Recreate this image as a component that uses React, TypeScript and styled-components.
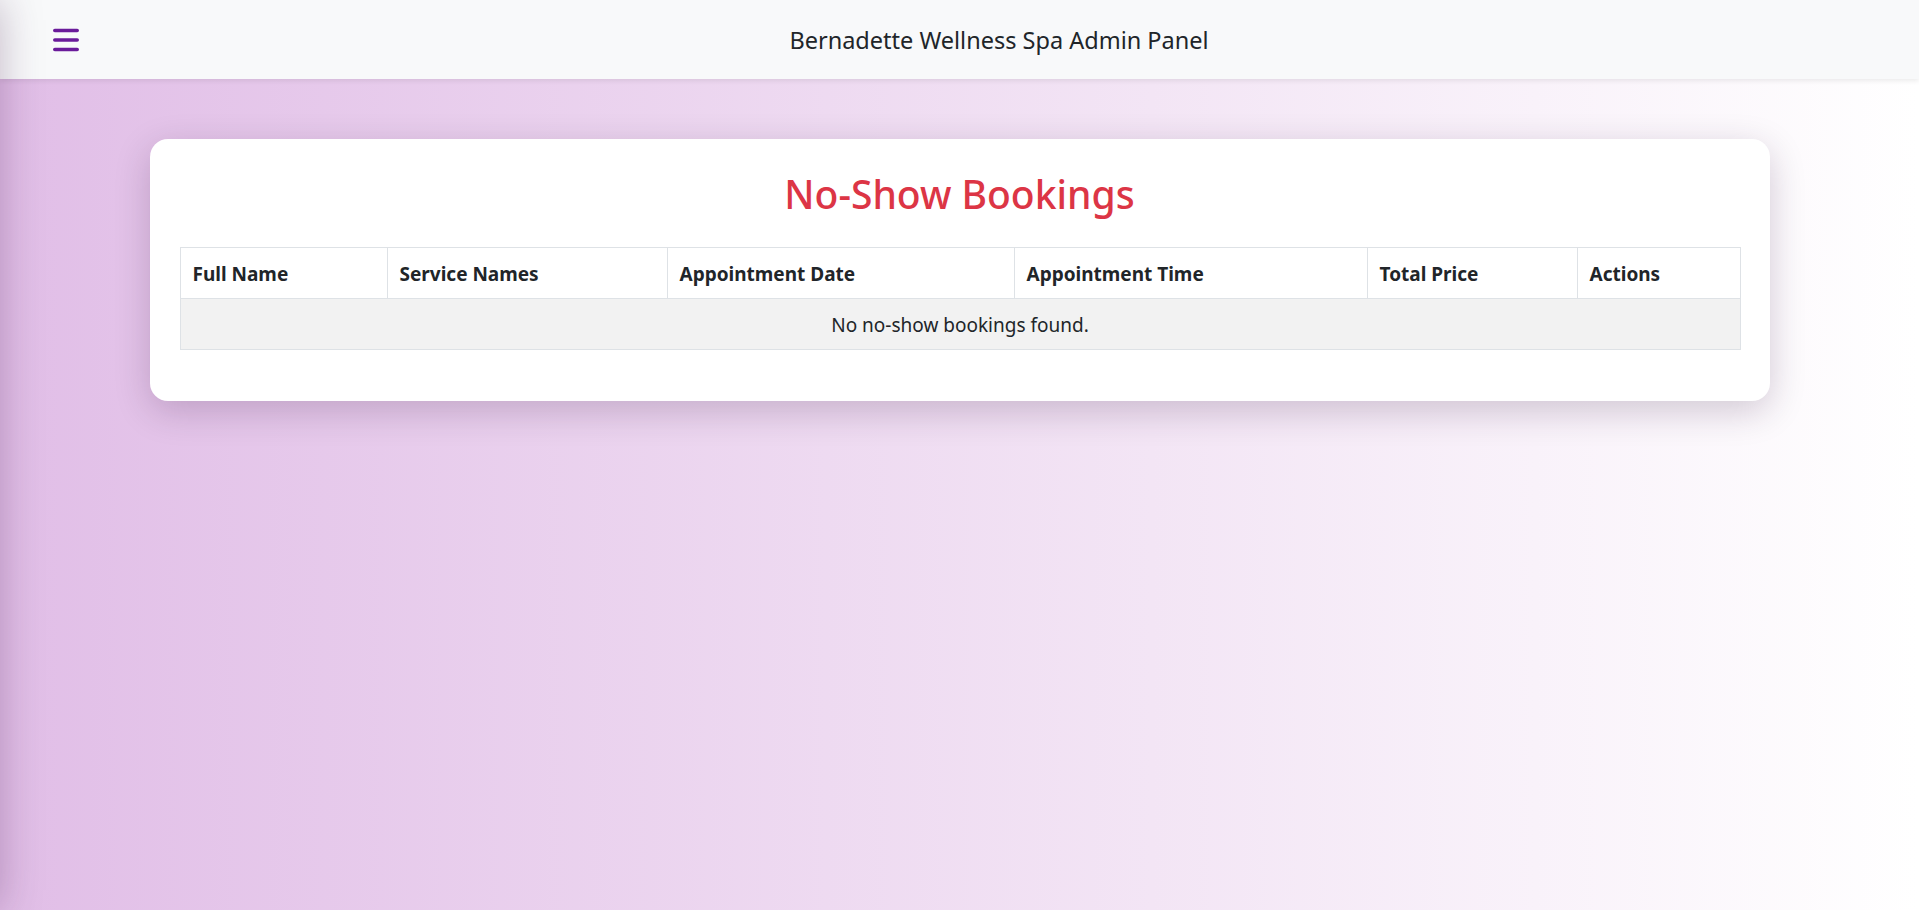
import React from "react";
import styled, { createGlobalStyle } from "styled-components";

const GlobalStyle = createGlobalStyle`
  * { box-sizing: border-box; }
  html, body { margin: 0; padding: 0; }
  body {
    font-family: "Noto Sans", "Open Sans", Arial, sans-serif;
    color: #212529;
    min-height: 100vh;
    background: linear-gradient(to right, #e1bee7 0%, #f3e5f5 60%, #ffffff 100%);
    overflow: hidden;
  }
`;

const Page = styled.div`
  min-height: 100vh;
  display: flex;
  flex-direction: column;
`;

const HiddenSidebar = styled.aside`
  position: fixed;
  top: 0;
  left: -260px;
  width: 260px;
  height: 100vh;
  background: #ffffff;
  box-shadow: 0 0 40px rgba(60, 20, 70, 0.28);
  z-index: 20;
`;

const Header = styled.header`
  height: 79px;
  display: flex;
  align-items: center;
  padding: 0 0 0 53px;
  background: #f8f9fa;
  box-shadow: 0 2px 5px rgba(0, 0, 0, 0.08);
  position: relative;
  z-index: 10;
`;

const MenuButton = styled.button`
  width: 26px;
  height: 26px;
  padding: 0;
  border: none;
  background: transparent;
  display: flex;
  align-items: center;
  justify-content: center;
  cursor: pointer;
  color: #6a1b9a;
`;

const HeaderTitle = styled.h1`
  flex: 1;
  margin: 0;
  text-align: center;
  font-size: 23.5px;
  font-weight: 400;
  color: #212529;
`;

const Main = styled.main`
  display: flex;
  justify-content: center;
  padding-top: 60px;
`;

const Card = styled.section`
  width: 1620px;
  background: #ffffff;
  border-radius: 18px;
  padding: 30px;
  box-shadow: 0 10px 36px rgba(40, 10, 50, 0.2);
`;

const Title = styled.h2`
  margin: 0 0 30px;
  padding-top: 2px;
  text-align: center;
  font-size: 39px;
  line-height: 46px;
  font-weight: 500;
  color: #dc3545;
`;

const Table = styled.table`
  width: 100%;
  border-collapse: collapse;
  table-layout: fixed;
  margin-bottom: 21px;
  font-size: 19px;
`;

const HeadCell = styled.th<{ $w: number }>`
  width: ${(p) => p.$w}px;
  text-align: left;
  padding: 13px 12px 11px;
  line-height: 26px;
  font-weight: 700;
  color: #212529;
  background: #ffffff;
  border: 1px solid #dee2e6;
`;

const EmptyCell = styled.td`
  text-align: center;
  padding: 13px 12px 11px;
  line-height: 26px;
  color: #212529;
  background: #f2f2f2;
  border: 1px solid #dee2e6;
`;

const columns: { label: string; w: number }[] = [
  { label: "Full Name", w: 207 },
  { label: "Service Names", w: 280 },
  { label: "Appointment Date", w: 347 },
  { label: "Appointment Time", w: 353 },
  { label: "Total Price", w: 210 },
  { label: "Actions", w: 163 },
];

const MenuIcon = () => (
  <svg width="26" height="24" viewBox="0 0 26 24" fill="none">
    <g stroke="currentColor" strokeWidth="3.6" strokeLinecap="round">
      <line x1="1.8" y1="2.5" x2="24.2" y2="2.5" />
      <line x1="1.8" y1="12" x2="24.2" y2="12" />
      <line x1="1.8" y1="21.5" x2="24.2" y2="21.5" />
    </g>
  </svg>
);

export default function App() {
  return (
    <>
      <GlobalStyle />
      <HiddenSidebar />
      <Page>
        <Header>
          <MenuButton aria-label="Toggle menu">
            <MenuIcon />
          </MenuButton>
          <HeaderTitle>Bernadette Wellness Spa Admin Panel</HeaderTitle>
        </Header>
        <Main>
          <Card>
            <Title>No-Show Bookings</Title>
            <Table>
              <thead>
                <tr>
                  {columns.map((c) => (
                    <HeadCell key={c.label} $w={c.w}>
                      {c.label}
                    </HeadCell>
                  ))}
                </tr>
              </thead>
              <tbody>
                <tr>
                  <EmptyCell colSpan={6}>No no-show bookings found.</EmptyCell>
                </tr>
              </tbody>
            </Table>
          </Card>
        </Main>
      </Page>
    </>
  );
}
